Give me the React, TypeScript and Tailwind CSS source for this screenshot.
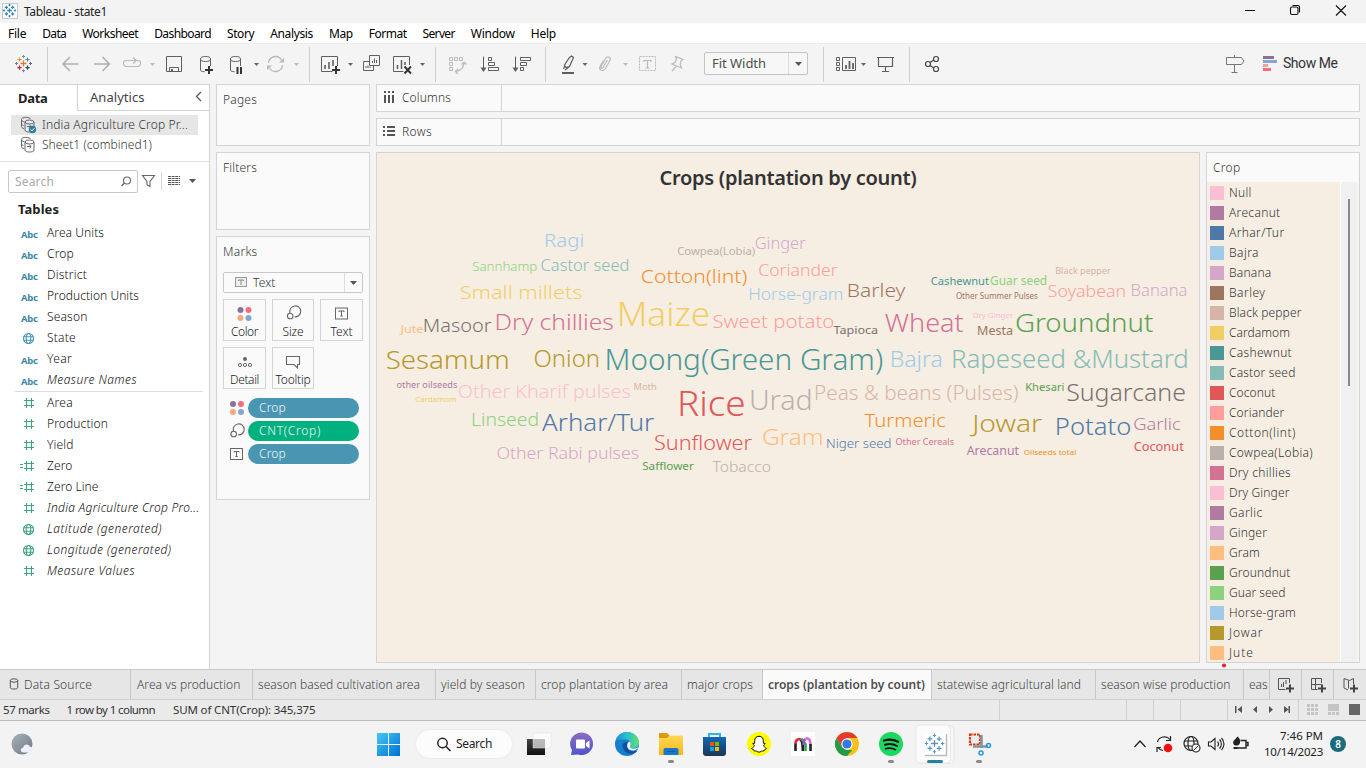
import { useLayoutEffect, useRef, useState } from "react";
import type { ReactNode } from "react";

const BLUE = "#4e79a7", SKY = "#a0cbe8", ORANGE = "#f28e2b", PEACH = "#ffbe7d", GREEN = "#59a14f", LIME = "#8cd17d";
const OLIVE = "#b6992d", YELLOW = "#f1ce63", TEAL = "#499894", AQUA = "#86bcb6", RED = "#e15759", SALMON = "#ff9d9a";
const GRAY = "#79706e", STONE = "#bab0ac", ROSE = "#d37295", PINK = "#fabfd2", PURPLE = "#b07aa1", LILAC = "#d4a6c8";
const BROWN = "#9d7660", TAN = "#d7b5a6";

/** Text whose letter spacing is adjusted so that it spans `w` pixels. */
function Fit({ w, children, className = "" }: { w: number; children: string; className?: string }) {
  const ref = useRef<HTMLSpanElement>(null);
  const [spacing, setSpacing] = useState(0);
  useLayoutEffect(() => {
    const natural = ref.current!.getBoundingClientRect().width;
    setSpacing((w - natural) / children.length);
  }, [w, children]);
  return (
    <span ref={ref} className={"inline-block shrink-0 whitespace-pre " + className} style={{ letterSpacing: spacing + "px" }}>
      {children}
    </span>
  );
}

/** Icon slot: a window of the drawing plane starting at (x, y). */
function Slot({ x, y, w, h, children }: { x: number; y: number; w: number; h: number; children?: ReactNode }) {
  return (
    <svg className="block shrink-0" width={w} height={h} viewBox={`${x} ${y} ${w} ${h}`} fill="none">
      {children}
    </svg>
  );
}

function Plus({ x, y, r, c, s = 1 }: { x: number; y: number; r: number; c: string; s?: number }) {
  return <path d={`M${x - r} ${y}h${2 * r}M${x} ${y - r}v${2 * r}`} stroke={c} strokeWidth={s} />;
}

function TableauMark({ cx, cy, k = 1, mono }: { cx: number; cy: number; k?: number; mono?: string }) {
  const p = (dx: number, dy: number, r: number, c: string, s = 1) => (
    <Plus x={cx + dx * k} y={cy + dy * k} r={r * k} c={mono || c} s={s} />
  );
  return (
    <g>
      {p(0, 0, 3, "#e8762b", 1.3)}
      {p(-4, -4, 2.1, "#eb9129", 1.2)}
      {p(4, -4, 2.1, "#59879b", 1.2)}
      {p(-4, 4.2, 2.1, "#c72035", 1.2)}
      {p(4, 4.2, 2.1, "#1f457e", 1.2)}
      {p(0, -7, 1.5, "#7099a5")}
      {p(0, 7.2, 1.5, "#7b848f")}
      {p(-7, 0, 1.5, "#59879b")}
      {p(7, 0, 1.5, "#5b6591")}
    </g>
  );
}

const Caret = ({ x, y, c = "#666" }: { x: number; y: number; c?: string }) => (
  <path d={`M${x - 2.5} ${y - 1}h5l-2.5 3z`} fill={c} />
);

const TB = { y: 44, h: 40 };
const D = "#5f5f5f";
const L = "#bababa";

const Sep = ({ x, w }: { x: number; w: number }) => (
  <Slot x={x} w={w} {...TB}>
    <path d={`M${x + 0.5} 47v35`} stroke="#d0d0d0" />
  </Slot>
);

const Cylinder = () => (
  <>
    <path d="M200.500 59.500V70c0 1 1 1.600 4 1.700M210.500 59.500V66" stroke={D} />
    <ellipse cx="205.500" cy="59" rx="5" ry="2.500" stroke={D} />
  </>
);

function Toolbar() {
  return (
    <div className="flex h-[41px] border-t border-[#ececec] bg-[#f4f4f4]">
      <Slot x={0} w={47} {...TB}><TableauMark cx={23.5} cy={63.5} /></Slot>
      <Sep x={47} w={7} />
      <Slot x={54} w={32} {...TB}><path d="M63 64h15.500M70 57l-7 7 7 7" stroke="#b0b0b0" strokeWidth="1.600" /></Slot>
      <Slot x={86} w={32} {...TB}><path d="M94 64h15.500M102.500 57l7 7-7 7" stroke="#b0b0b0" strokeWidth="1.600" /></Slot>
      <Slot x={118} w={44} {...TB}>
        <path d="M134 60.500h-8.500a2.500 2.500 0 0 0-2 2.500c0 2 1 3.500 3 3.500h11c2 0 3-1.500 3-3.500 0-1.500-.5-2.500-2-2.500h-5M133 57.500l3.500 3-3.500 3" stroke={L} strokeWidth="1.200" />
        <Caret x={152.500} y={64} c={L} />
      </Slot>
      <Slot x={162} w={28} {...TB}>
        <path d="M166.500 56.500h15v15h-15zM169.500 71.500v-4h9v4" stroke={D} /><path d="M171 69h2v3h-2z" fill={D} />
      </Slot>
      <Slot x={190} w={32} {...TB}>
        <Cylinder /><path d="M205 70h8M209 66v8" stroke="#333" strokeWidth="2" />
      </Slot>
      <Slot x={222} w={42} {...TB}>
        <g transform="translate(30 0)"><Cylinder /></g>
        <path d="M237.500 67v7M241 67v7" stroke="#333" strokeWidth="2" /><Caret x={256.500} y={64} />
      </Slot>
      <Slot x={264} w={45} {...TB}>
        <path d="M268.500 63a7 7 0 0 1 13-3M282.500 65a7 7 0 0 1-13 3" stroke={L} strokeWidth="1.300" />
        <path d="M284 58v4.500h-5zM267 70v-4.500h5z" fill={L} /><Caret x={296.500} y={64} c={L} />
      </Slot>
      <Sep x={309} w={8} />
      <Slot x={317} w={43} {...TB}>
        <path d="M337.500 66v-9.500h-16v15h11" stroke={D} /><path d="M325 65v4M329 62v7M333 60v6" stroke={D} strokeWidth="1.600" />
        <path d="M332 70h8M336 66v8" stroke="#333" strokeWidth="2" /><Caret x={350.500} y={64} />
      </Slot>
      <Slot x={360} w={28} {...TB}>
        <path d="M369.500 55.500h10v10h-10zM369.500 61.500h-6v9h10v-5" stroke={D} />
        <path d="M372.500 61v2M374.500 58.500v4.500M376.500 60v3M366 66v2M368 65.500v2.500M370 66.500v1.500" stroke={D} />
      </Slot>
      <Slot x={388} w={47} {...TB}>
        <path d="M409.500 65v-8.500h-16v15h10" stroke={D} /><path d="M397.500 65v4M401.500 60v9M405 62v3" stroke={D} strokeWidth="1.500" />
        <path d="M404.500 66.500l6.500 7M411 66.500l-6.500 7" stroke="#333" strokeWidth="1.900" /><Caret x={422.500} y={64} />
      </Slot>
      <Sep x={435} w={9} />
      <Slot x={444} w={32} {...TB}>
        <path d="M449.500 57.500h3v3h-3zM454.500 57.500h3v3h-3zM459.500 57.500h3v3h-3zM449.500 62.500h3v3h-3zM449.500 67.500h3v3h-3z" stroke={L} />
        <path d="M464 62c0 5-2 8.500-8 9.500M461.500 64.500l2.500-2.500 2.500 2.500M458 69l-2.500 2.500 2.500 2.500" stroke={L} strokeWidth="1.200" />
      </Slot>
      <Slot x={476} w={32} {...TB}>
        <path d="M483.500 56.500v13M488.500 57.500h3v3h-3zM488.500 62.500h6v3h-6zM488.500 67.500h10v3h-10z" stroke={D} />
        <path d="M480.500 67.500h6l-3 4.500z" fill={D} />
      </Slot>
      <Slot x={508} w={37} {...TB}>
        <path d="M515.500 56.500v13M520.500 57.500h10v3h-10zM520.500 62.500h6v3h-6zM520.500 67.500h3v3h-3z" stroke={D} />
        <path d="M512.500 67.500h6l-3 4.500z" fill={D} />
      </Slot>
      <Sep x={545} w={9} />
      <Slot x={554} w={38} {...TB}>
        <path d="M562 73h12" stroke={D} strokeWidth="2" />
        <path d="M569.500 57.500l2-1.500 2 1.500-4 9-3.500 1-1.500-2.500zM565 65l-1.500 4M569 67l-4 3" stroke={D} strokeWidth="1.200" />
        <Caret x={585} y={64} />
      </Slot>
      <Slot x={592} w={41} {...TB}>
        <path d="M607.500 60l-4.500 7.500c-1 1.500-3 .5-2-1.200l5-8.300c1.500-2.500 5.500-.5 4 2.500l-5 8.500c-2 3-6.500 1-5-2.500l3.500-6" stroke={L} strokeWidth="1.200" />
        <Caret x={625.500} y={64} c={L} />
      </Slot>
      <Slot x={633} w={31} {...TB}>
        <path d="M639.500 56.500h16v14h-16z" stroke={L} strokeDasharray="2 1" />
        <path d="M644 62v-1.500h7V62M647.500 60.500V68M645.500 68h4" stroke={L} strokeWidth="1.200" />
      </Slot>
      <Slot x={664} w={40} {...TB}>
        <path d="M675.500 56.500l7.500 3-2 1.300-.8 3.700 1.300 3.500-9.500-4 3-1.500 1.500-3.500zM676 66.500l-4 4.500" stroke={L} strokeWidth="1.200" />
      </Slot>
      <div className="mt-[8px] flex h-[23px] w-[104px] items-center rounded-[2px] border border-[#c4c4c4] bg-[#f7f7f7] pl-[7px]">
        <Fit w={54} className="text-[13px] leading-[21px] text-[#4e4e4e]">Fit Width</Fit>
        <div className="ml-auto h-[21px] border-l border-[#dcdcdc]">
          <Slot x={790} y={53} w={18} h={21}><path d="M796 62h7l-3.500 4z" fill="#555" /></Slot>
        </div>
      </div>
      <Slot x={808} w={15} {...TB} />
      <Sep x={823} w={8} />
      <Slot x={831} w={40} {...TB}>
        <path d="M836.500 57.500h3v3h-3zM836.500 62.500h3v3h-3zM836.500 67.500h3v3h-3zM842.500 57.500h13v13h-13z" stroke={D} />
        <path d="M846 65v4M849.500 61v8M853 63v6" stroke={D} strokeWidth="1.800" /><Caret x={863.500} y={64} />
      </Slot>
      <Slot x={871} w={38} {...TB}>
        <path d="M877 57.500h17M878.500 58v8.500h14V58M885.500 67v4.500M882 71.500h7" stroke={D} strokeWidth="1.200" />
      </Slot>
      <Sep x={909} w={8} />
      <Slot x={917} w={32} {...TB}>
        <g stroke="#444" strokeWidth="1.200"><circle cx="928" cy="64" r="2.500" /><circle cx="936" cy="59" r="2.500" /><circle cx="936" cy="69" r="2.500" /><path d="M930 62.500l4-2.500M930 65.500l4 2.500" /></g>
      </Slot>
      <div className="ml-auto flex">
        <Slot x={1220} w={40} {...TB}>
          <path d="M1226.500 57.500h15l2.500 3.500-2.500 3.500h-15zM1234.500 55v2.500M1234.500 65v7.500M1231.500 72.500h6" stroke="#777" />
        </Slot>
        <Slot x={1260} w={23} {...TB}>
          <path d="M1263 56h11v3h-11z" fill="#8b7099" /><path d="M1263 60h14v3h-14z" fill="#84a6cf" />
          <path d="M1263 64h5v3h-5z" fill="#f3a683" /><path d="M1263 68h8v3h-8z" fill="#f96c7d" />
        </Slot>
        <div className="-mt-[2px] flex w-[83px] items-center font-['Roboto',sans-serif]">
          <Fit w={54.500} className="text-[14px] leading-[20px] text-[#333]">Show Me</Fit>
        </div>
      </div>
    </div>
  );
}

const MENU: [string, number][] = [
  ["File", 18.2], ["Data", 24], ["Worksheet", 56], ["Dashboard", 56.8], ["Story", 27.2], ["Analysis", 42.8],
  ["Map", 23.7], ["Format", 37.8], ["Server", 32.3], ["Window", 44], ["Help", 25],
];

const DsIcon = ({ check }: { check?: boolean }) => (
  <Slot x={20} y={115} w={18} h={20}>
    <g stroke="#666">
      <path d="M24 128.500c-2-.3-2.500-1-2.500-2v-6.500M30.500 119c-.5-2-9-2.500-9 .5 0 1.500 1 2 3 2.300M21.500 123.500c0 1 .5 1.500 2 2" />
      <ellipse cx="29.500" cy="122" rx="4.500" ry="2" /><path d="M25 122v8c0 1.500 2 2 4.500 2s4.500-.5 4.500-2v-8M27 126.500h4M29.500 125l1.700 1.500-1.700 1.500" />
    </g>
    {check && <><circle cx="32.500" cy="129.500" r="3.700" fill="#2f7d9e" /><path d="M30.700 129.500l1.300 1.400 2.400-2.700" stroke="#fff" /></>}
  </Slot>
);

const Globe = ({ c }: { c: string }) => (
  <g stroke={c} strokeWidth="1.100"><circle cx="28.500" cy="10.500" r="5" /><ellipse cx="28.500" cy="10.500" rx="2.300" ry="5" /><path d="M23.500 8.800h10M23.500 12.200h10" /></g>
);

type FieldKind = "abc" | "geo" | "num" | "calc" | "geonum";
const DIMS: [FieldKind, string, number, boolean?][] = [
  ["abc", "Area Units", 57], ["abc", "Crop", 27], ["abc", "District", 40], ["abc", "Production Units", 92],
  ["abc", "Season", 40.5], ["geo", "State", 29], ["abc", "Year", 25], ["abc", "Measure Names", 90, true],
];
const MEAS: [FieldKind, string, number, boolean?][] = [
  ["num", "Area", 26], ["num", "Production", 61], ["num", "Yield", 26.5], ["calc", "Zero", 25.5], ["calc", "Zero Line", 51.5],
  ["num", "India Agriculture Crop Pro...", 152.5, true], ["geonum", "Latitude (generated)", 115, true],
  ["geonum", "Longitude (generated)", 124.5, true], ["num", "Measure Values", 88, true],
];

function Field({ kind, name, w, italic }: { kind: FieldKind; name: string; w: number; italic?: boolean }) {
  return (
    <div className="flex h-[21px] items-center">
      {kind === "abc" ? (
        <div className="-mt-[3px] w-[47px] pl-[21px]"><Fit w={16.500} className="text-[9.500px] leading-[21px] font-bold text-[#4187a2]">Abc</Fit></div>
      ) : (
        <Slot x={0} y={0} w={47} h={21}>
          {kind === "geo" && <Globe c="#4996b2" />}
          {kind === "geonum" && <Globe c="#3fa57f" />}
          {(kind === "num" || kind === "calc") && <path d="M26.500 5v10M31.500 5v10M24 7.500h10M24 12.500h10" stroke="#3fa57f" strokeWidth="1.100" />}
          {kind === "calc" && <path d="M20 8.500h3M20 11.500h3" stroke="#3fa57f" strokeWidth="1.100" />}
        </Slot>
      )}
      <Fit w={w} className={"-mt-[2px] text-[12px] leading-[19px] font-light " + (italic ? "text-[#111] italic" : "text-[#111]")}>{name}</Fit>
    </div>
  );
}

function DataPane() {
  return (
    <div className="flex h-[585px] w-[210px] flex-col border-t border-r border-[#d4d4d4] bg-white">
      <div className="flex h-[26px]">
        <div className="w-[77px] pl-[18px]"><Fit w={29.500} className="text-[13px] leading-[24px] font-bold text-[#222]">Data</Fit></div>
        <div className="flex flex-1 border-b border-l border-[#d4d4d4] pl-[12px]">
          <Fit w={54.500} className="text-[13px] leading-[25px] text-[#444]">Analytics</Fit>
          <div className="ml-auto"><Slot x={191} y={85} w={18} h={25}><path d="M201 92l-4.500 4.500 4.500 4.500" stroke="#555" strokeWidth="1.200" /></Slot></div>
        </div>
      </div>
      <div className="mt-[4px] ml-[11px] flex h-[20px] w-[187px] items-center bg-[#e6e6e6] pl-[9px] text-[12px] font-light text-[#333]">
        <DsIcon check /><Fit w={146} className="ml-[4px] leading-[18px]">India Agriculture Crop Pr...</Fit>
      </div>
      <div className="ml-[20px] flex h-[20px] items-center text-[12px] font-light text-[#333]">
        <DsIcon /><Fit w={110} className="ml-[4px] leading-[18px]">Sheet1 (combined1)</Fit>
      </div>
      <div className="mt-[6px] h-px shrink-0 bg-[#e0e0e0]" />
      <div className="mt-[8px] flex h-[23px] shrink-0">
        <div className="ml-[8px] flex w-[130px] items-center justify-between rounded-[2px] border border-[#c8c8c8] pl-[6px]">
          <Fit w={39} className="text-[12px] leading-[20px] text-[#aaa]">Search</Fit>
          <Slot x={118} y={170} w={18} h={21}><circle cx="126" cy="179.500" r="3.500" stroke="#666" strokeWidth="1.100" /><path d="M123.500 182l-3 3" stroke="#666" strokeWidth="1.400" /></Slot>
        </div>
        <Slot x={138} y={170} w={71} h={23}>
          <path d="M142.500 175.500h12l-4.500 6v5l-3-1.500v-3.500z" stroke="#666" strokeWidth="1.100" />
          <path d="M161.500 172v18" stroke="#d4d4d4" />
          <path d="M168 176.500h12M168 178.500h12M168 180.500h12M168 182.500h12M168 184.500h12" stroke="#555" strokeDasharray="3 .600" />
          <path d="M189 179h7l-3.500 4z" fill="#555" />
        </Slot>
      </div>
      <Fit w={41} className="mt-[6px] ml-[18px] self-start text-[13px] leading-[20px] font-bold text-[#222]">Tables</Fit>
      <div className="mt-[4px]">{DIMS.map(([k, n, w, i]) => <Field key={n} kind={k} name={n} w={w} italic={i} />)}</div>
      <div className="mr-[6px] mb-px ml-[15px] h-px shrink-0 bg-[#dcdcdc]" />
      <div>{MEAS.map(([k, n, w, i]) => <Field key={n} kind={k} name={n} w={w} italic={i} />)}</div>
    </div>
  );
}

const FourDots = ({ x, y }: { x: number; y: number }) => (
  <g><circle cx={x - 4} cy={y - 4} r="3" fill="#8b7099" /><circle cx={x + 4} cy={y - 4} r="3" fill="#f96c7d" /><circle cx={x - 4} cy={y + 4} r="3" fill="#f3a97c" /><circle cx={x + 4} cy={y + 4} r="3" fill="#84a6cf" /></g>
);
const SizeIcon = ({ x, y }: { x: number; y: number }) => (
  <g stroke="#666" strokeWidth="1.100"><path d={`M${x - 4.500} ${y + 1}a5.500 5.500 0 1 1 4.500 3.800`} /><circle cx={x - 4.300} cy={y + 4} r="2.800" /></g>
);
const TextIcon = ({ x, y }: { x: number; y: number }) => (
  <g stroke="#666"><rect x={x - 6} y={y - 5.500} width="12" height="11" /><path d={`M${x - 2.500} ${y - 1.500}v-1h5v1M${x} ${y - 2.500}v5M${x - 1.200} ${y + 2.500}h2.500`} /></g>
);

function MarkButton({ label, w, width, children }: { label: string; w: number; width: string; children: ReactNode }) {
  return (
    <div className={"flex h-[42px] flex-col items-center border border-[#d4d4d4] bg-[#fafafa] " + width}>
      <Slot x={-12} y={-13} w={24} h={24}>{children}</Slot>
      <Fit w={w} className="text-[12px] leading-[16px] font-light text-[#222]">{label}</Fit>
    </div>
  );
}

function Pill({ label, w, color, children }: { label: string; w: number; color: string; children: ReactNode }) {
  return (
    <div className="flex h-[20px] items-center">
      <Slot x={-10} y={-10} w={21} h={20}>{children}</Slot>
      <div className={"ml-px h-[20px] w-[111px] rounded-full pl-[11px] text-[12px] leading-[19px] text-[#f4f8fa] " + color}>
        <Fit w={w}>{label}</Fit>
      </div>
    </div>
  );
}

function Cards() {
  const card = "border border-[#d4d4d4] bg-[#fafafa] pl-[6px] text-[12px] font-light text-[#333] ";
  return (
    <div className="ml-[6px] flex w-[154px] flex-col gap-[6px]">
      <div className={card + "h-[62px]"}><Fit w={34} className="mt-[5px] leading-[20px]">Pages</Fit></div>
      <div className={card + "h-[78px]"}><Fit w={34} className="mt-[5px] leading-[20px]">Filters</Fit></div>
      <div className={card + "flex h-[264px] flex-col"}>
        <Fit w={34.500} className="mt-[5px] self-start leading-[20px]">Marks</Fit>
        <div className="mt-[10px] flex h-[21px] w-[140px] items-center rounded-[2px] border border-[#c8c8c8]">
          <Slot x={223} y={273} w={29} h={19}><rect x="234.500" y="277.500" width="11" height="9" fill="#eee" stroke="#999" /><path d="M237.500 281v-1h5v1M240 280v5" stroke="#888" /></Slot>
          <Fit w={22.500} className="leading-[19px]">Text</Fit>
          <div className="ml-auto h-[19px] border-l border-[#dcdcdc]"><Slot x={345} y={273} w={17} h={19}><path d="M350 281h7l-3.500 4z" fill="#555" /></Slot></div>
        </div>
        <div className="mt-[6px] flex w-[140px] flex-wrap gap-[6px]">
          <MarkButton label="Color" w={27} width="w-[43px]"><FourDots x={-0.500} y={1} /></MarkButton>
          <MarkButton label="Size" w={21} width="w-[42px]"><SizeIcon x={1.500} y={-1} /></MarkButton>
          <MarkButton label="Text" w={22} width="w-[43px]"><TextIcon x={-0.500} y={0.500} /></MarkButton>
          <MarkButton label="Detail" w={29} width="w-[43px]">
            <circle cx="0" cy="-2" r="2" fill="#666" /><g stroke="#666"><circle cx="-5" cy="4" r="1.600" /><circle cx="0" cy="4" r="1.600" /><circle cx="5" cy="4" r="1.600" /></g>
          </MarkButton>
          <MarkButton label="Tooltip" w={35} width="w-[42px]"><path d="M-6.500-4.500h13v8h-2v3.500l-3.500-3.500h-7.500z" stroke="#666" strokeWidth="1.100" /></MarkButton>
        </div>
        <div className="mt-[9px] ml-[3px] flex flex-col gap-[3px]">
          <Pill label="Crop" w={27} color="bg-[#4996b2]"><FourDots x={1} y={0} /></Pill>
          <Pill label="CNT(Crop)" w={62} color="bg-[#00b180]"><SizeIcon x={2} y={-1} /></Pill>
          <Pill label="Crop" w={27} color="bg-[#4996b2]"><TextIcon x={0.500} y={0} /></Pill>
        </div>
      </div>
    </div>
  );
}

/** word, left, baseline, width, font size, colour */
const WORDS: [string, number, number, number, number, string][] = [
  ["Ragi", 545, 247, 38.5, 18.5, SKY], ["Sannhamp", 472.8, 271, 64, 13, LIME], ["Castor seed", 541.3, 271, 87.5, 15.5, AQUA],
  ["Cowpea(Lobia)", 677.7, 255, 77, 11.5, STONE], ["Ginger", 755.5, 249, 49.5, 15.5, LILAC], ["Coriander", 759, 276, 78, 16, SALMON],
  ["Cotton(lint)", 641.7, 283.3, 105, 18.5, ORANGE], ["Small millets", 460.7, 299, 121, 19, YELLOW], ["Horse-gram", 749, 300.3, 93.7, 16, SKY],
  ["Barley", 847.7, 297, 57, 18, BROWN], ["Maize", 618.3, 326, 90.5, 33, YELLOW], ["Jute", 401, 333, 22, 11, PEACH],
  ["Masoor", 423.7, 332, 67.3, 18, GRAY], ["Dry chillies", 495.7, 330, 117.3, 22.5, ROSE], ["Sweet potato", 713.3, 328.3, 120.4, 18, SALMON],
  ["Tapioca", 834, 334, 43.7, 11.5, GRAY], ["Wheat", 886, 332, 76.7, 25, ROSE], ["Groundnut", 1016.3, 332, 136, 26.5, GREEN],
  ["Dry Ginger", 973, 317.7, 40, 7.5, PINK], ["Mesta", 977.7, 335.3, 35, 12, BROWN], ["Cashewnut", 931.3, 285, 57.3, 11.3, TEAL],
  ["Guar seed", 990.7, 285, 56, 12, LIME], ["Black pepper", 1055.7, 274, 54.7, 9.3, TAN], ["Other Summer Pulses", 956.3, 299, 81.3, 8, BROWN],
  ["Soyabean", 1048.7, 297, 76.7, 17, SALMON], ["Banana", 1131.3, 296, 55.5, 15.5, LILAC], ["Sesamum", 387, 369, 121.7, 26.5, OLIVE],
  ["Onion", 534.7, 367, 64.3, 24, OLIVE], ["Moong(Green Gram)", 606, 370, 276, 29, TEAL], ["Bajra", 890.7, 367, 51.3, 21, SKY],
  ["Rapeseed &Mustard", 952.3, 368, 235.5, 25.5, AQUA], ["other oilseeds", 397, 388, 60, 9, PURPLE], ["Cardamom", 415.7, 401.7, 40.5, 7.5, YELLOW],
  ["Other Kharif pulses", 458.7, 398, 171.3, 18.5, PINK], ["Moth", 634, 390, 22.3, 9.3, TAN], ["Rice", 678.7, 416, 65.7, 35, RED],
  ["Urad", 750.3, 410, 61.4, 27, STONE], ["Peas & beans (Pulses)", 815, 400, 202.7, 19.5, TAN], ["Khesari", 1025.7, 391.3, 38.3, 11, GREEN],
  ["Sugarcane", 1067.3, 401, 117.7, 23.5, GRAY], ["Linseed", 472, 426, 66.3, 18, LIME], ["Arhar/Tur", 543.3, 431, 110, 24, BLUE],
  ["Other Rabi pulses", 497.3, 459, 141, 16.5, LILAC], ["Sunflower", 655, 450, 96.3, 19.5, RED], ["Gram", 763, 445, 59.7, 22.5, PEACH],
  ["Safflower", 642.7, 470, 50.7, 11, GREEN], ["Tobacco", 713.3, 472, 57, 15, STONE], ["Turmeric", 865.3, 427, 80, 18, ORANGE],
  ["Niger seed", 826.7, 448, 64.3, 13, BLUE], ["Other Cereals", 896, 445, 57.7, 9.3, ROSE], ["Jowar", 973.3, 432.3, 68, 23, OLIVE],
  ["Potato", 1056, 435, 74.3, 24, BLUE], ["Garlic", 1134, 430, 46, 16.5, PURPLE], ["Coconut", 1134.3, 451, 49, 12.3, RED],
  ["Arecanut", 967.3, 455, 51.3, 12, PURPLE], ["Oilseeds total", 1024, 455, 52, 7.5, ORANGE],
];

function WordCloud() {
  return (
    <div className="flex w-[824px] flex-col items-center border border-[#d4d4d4] bg-[#f6eee3]">
      <Fit w={257} className="mt-[10px] text-[20px] leading-[30px] font-semibold text-[#333]">Crops (plantation by count)</Fit>
      <svg className="block" width={822} height={469} viewBox="377 193 822 469">
        {WORDS.map(([t, x, y, w, s, c]) => (
          <text key={t} x={x - 0.05 * s} y={y} textLength={w + 0.09 * s} lengthAdjust="spacingAndGlyphs" fontSize={s} fill={c} fontWeight={s < 12.8 ? 400 : 300}>{t}</text>
        ))}
      </svg>
    </div>
  );
}

const LEGEND: [string, string, number][] = [
  ["Null", PINK, 22.7], ["Arecanut", PURPLE, 51.5], ["Arhar/Tur", BLUE, 55.5], ["Bajra", SKY, 30], ["Banana", LILAC, 42.5], ["Barley", BROWN, 36.5],
  ["Black pepper", TAN, 72.5], ["Cardamom", YELLOW, 61], ["Cashewnut", TEAL, 63], ["Castor seed", AQUA, 66.5], ["Coconut", RED, 46.5],
  ["Coriander", SALMON, 55.5], ["Cotton(lint)", ORANGE, 67], ["Cowpea(Lobia)", STONE, 84], ["Dry chillies", ROSE, 62], ["Dry Ginger", PINK, 60.5],
  ["Garlic", PURPLE, 33.5], ["Ginger", LILAC, 38], ["Gram", PEACH, 31], ["Groundnut", GREEN, 61.5], ["Guar seed", LIME, 56.5],
  ["Horse-gram", SKY, 67], ["Jowar", OLIVE, 34.5], ["Jute", PEACH, 25],
];

function Legend() {
  return (
    <div className="flex w-[154px] flex-col border border-[#d4d4d4] bg-[#fafafa]">
      <div className="h-[29px] pl-[6px]"><Fit w={27.500} className="text-[12px] leading-[29px] font-light text-[#333]">Crop</Fit></div>
      <div className="flex h-[480px]">
        <div className="w-[133px] overflow-hidden bg-[#f6eee3] pt-px pl-[3px]">
          {LEGEND.map(([n, c, w]) => (
            <div key={n} className="flex h-[20px] items-center pb-px">
              <svg className="block" width={14} height={14}><rect width={14} height={14} fill={c} /></svg>
              <Fit w={w} className="ml-[5px] pt-px text-[12px] leading-[18px] font-light text-[#333]">{n}</Fit>
            </div>
          ))}
        </div>
        <div className="w-px bg-white" />
        <div className="flex w-[16px] justify-center bg-[#f0f0f0] pt-[17px]"><div className="h-[187px] w-[2px] bg-[#8a8a8a]" /></div>
        <div className="flex-1 bg-[#f6eee3]/50" />
      </div>
    </div>
  );
}

const TABS: [string, number, string, string][] = [
  ["Area vs production", 103.5, "w-[122px]", "pl-[6px]"], ["season based cultivation area", 162, "w-[183px]", "pl-[5px]"],
  ["yield by season", 84, "w-[100px]", "pl-[5px]"], ["crop plantation by area", 127, "w-[146px]", "pl-[5px]"],
  ["major crops", 66, "w-[81px]", "pl-[5px]"], ["crops (plantation by count)", 157, "w-[169px]", "pl-[5px]"],
  ["statewise agricultural land", 144, "w-[164px]", "pl-[5px]"], ["season wise production", 129.5, "w-[148px]", "pl-[5px]"],
  ["eas", 18.5, "w-[26px]", "pl-[5px]"],
];

function SheetTabs() {
  const y = 670, h = 29, add = "#555";
  return (
    <div className="flex h-[30px] border-t border-[#c8c8c8] bg-[#e6e6e6] text-[12px] leading-[29px] font-light text-[#444]">
      <div className="flex w-[131px] shrink-0 border-r border-[#c8c8c8]">
        <Slot x={0} y={y} w={24} h={h}><ellipse cx="14" cy="680.500" rx="3.700" ry="1.700" stroke={add} /><path d="M10.300 680.500v7c0 1 1.500 1.500 3.700 1.500s3.700-.5 3.700-1.500v-7" stroke={add} /></Slot>
        <Fit w={68}>Data Source</Fit>
      </div>
      {TABS.map(([t, w, width, pad], i) => (
        <div key={t} className={"shrink-0 overflow-hidden border-r border-[#c8c8c8] " + width + " " + pad + (i === 5 ? " bg-[#fafafa] font-semibold text-[#4e4e4e]" : "")}>
          <Fit w={w} className={i === 5 ? "leading-[27px]" : ""}>{t}</Fit>
        </div>
      ))}
      <Slot x={1270} y={y} w={96} h={h}>
        <path d="M1301.500 670v29M1333.500 670v29" stroke="#c8c8c8" />
        <path d="M1289.500 683v-4.500h-11v11h7M1281.500 684v3M1283.500 682v5M1286 680v4" stroke={add} />
        <path d="M1321.500 683v-4.500h-10v11h6M1311.500 684.500h10M1315.500 678.500v11" stroke={add} />
        <path d="M1353.500 684v-5.500l-4 2-5.500-2v9.500l4 2M1348.500 680.500v8" stroke={add} />
        <g stroke="#444" strokeWidth="2"><path d="M1286 688.500h8M1290 684.500v8M1318 688.500h8M1322 684.500v8M1350 688.500h8M1354 684.500v8" /></g>
      </Slot>
    </div>
  );
}

function StatusBar() {
  const dots = [0, 4, 8];
  return (
    <div className="flex h-[22px] border-y border-t-[#d0d0d0] border-b-[#bcbcbc] bg-[#eaeaea] pl-[3px] text-[11.500px] leading-[20px] text-[#333]">
      <Fit w={46.500}>57 marks</Fit>
      <Fit w={88.500} className="ml-[17px]">1 row by 1 column</Fit>
      <Fit w={142.500} className="ml-[18px]">SUM of CNT(Crop): 345,375</Fit>
      <div className="ml-auto">
        <Slot x={990} y={700} w={376} h={20}>
          <path d="M999.500 700v20M1126.500 700v20M1153.500 700v20M1180.500 700v20M1227.500 700v20M1298.500 700v20" stroke="#cfcfcf" />
          <path d="M1235 706h1.500v7h-1.500zM1242 706v7l-4.500-3.500zM1257 706v7l-4-3.500zM1269 706v7l4-3.500zM1284 706v7l4.500-3.500zM1288.500 706h1.500v7h-1.500z" fill="#555" />
          {dots.map((a) => dots.map((b) => <rect key={a + "-" + b} x={1307 + a} y={704 + b} width="3" height="3" fill="#c4c4c4" />))}
          <rect x="1328" y="704" width="11" height="7" fill="#c4c4c4" />
          {dots.map((a) => <rect key={a} x={1328 + a} y="712" width="3" height="3" fill="#c4c4c4" />)}
          <rect x="1349" y="704" width="11" height="11" fill="#666" />
        </Slot>
      </div>
    </div>
  );
}

function Taskbar() {
  const b = { y: 721, h: 47 };
  return (
    <div className="flex h-[47px] bg-[#f3f3f3]">
      <svg width="0" height="0" className="absolute">
        <defs>
          <linearGradient id="win" x1="0" y1="0" x2="1" y2="1"><stop offset="0" stopColor="#45c8f7" /><stop offset="1" stopColor="#0070d4" /></linearGradient>
          <linearGradient id="dark" x1="0" y1="0" x2="0" y2="1"><stop offset="0" stopColor="#444" /><stop offset="1" stopColor="#111" /></linearGradient>
          <linearGradient id="chat" x1="0" y1="0" x2="0" y2="1"><stop offset="0" stopColor="#8b6cc4" /><stop offset="1" stopColor="#4f55c8" /></linearGradient>
          <linearGradient id="edge" x1="0" y1="0" x2="1" y2="0"><stop offset="0" stopColor="#1a8fd8" /><stop offset=".5" stopColor="#2cc0d0" /><stop offset="1" stopColor="#66e06a" /></linearGradient>
          <linearGradient id="folder" x1="0" y1="0" x2="0" y2="1"><stop offset="0" stopColor="#ffdb5c" /><stop offset="1" stopColor="#f9b81c" /></linearGradient>
          <linearGradient id="bag" x1="0" y1="0" x2="0" y2="1"><stop offset="0" stopColor="#0f68b8" /><stop offset="1" stopColor="#1d3557" /></linearGradient>
          <linearGradient id="moon" x1="0" y1="0" x2="1" y2="1"><stop offset="0" stopColor="#a9b2ba" /><stop offset="1" stopColor="#6f7a84" /></linearGradient>
        </defs>
      </svg>
      <Slot x={0} w={370} {...b}>
        <circle cx="22" cy="744" r="10.500" fill="url(#moon)" />
        <path d="M23.500 752.500c-3.500 0-3.500-4.500-.3-4.700.5-3.500 5-4.500 6.600-1 4.500-.3 4.500 5.700.7 5.700z" fill="#eef1f8" />
      </Slot>
      <Slot x={370} w={45} {...b}>
        <path d="M377 733h11v11h-11zM389 733h11v11h-11zM377 745h11v11h-11zM389 745h11v11h-11z" fill="url(#win)" />
      </Slot>
      <div className="mt-[8px] flex h-[30px] w-[98px] items-center rounded-full border border-[#ececec] bg-[#fcfcfc] pl-[20px]">
        <Slot x={436} y={736} w={20} h={16}><circle cx="442.500" cy="743" r="4.700" stroke="#222" strokeWidth="1.500" /><path d="M446 746.500l4.500 4.500" stroke="#222" strokeWidth="1.600" /></Slot>
        <Fit w={36} className="text-[12px] leading-[20px] text-[#222]">Search</Fit>
      </div>
      <Slot x={513} w={47} {...b}>
        <path d="M527 739h18v16h-18z" fill="url(#dark)" /><path d="M533 733h18v15h-18z" fill="#fff" opacity=".65" /><path d="M533 733h18v15h-18z" stroke="#ddd" strokeWidth=".5" />
      </Slot>
      <Slot x={560} w={44} {...b}>
        <path d="M571 755l1-5a11.500 11.300 0 1 1 6 4.500z" fill="url(#chat)" /><rect x="576" y="739.500" width="9" height="9" rx="1" fill="#fff" /><path d="M586 743l3.500-2.500v8l-3.500-2.500z" fill="#fff" />
      </Slot>
      <Slot x={604} w={44} {...b}>
        <circle cx="627" cy="744" r="12" fill="#1580d0" />
        <path d="M615.500 741c2-6 7-9.200 12-9 7 .3 12 5.500 11.500 11-.4 4-4 5.500-7 5-2-.4-2.500-1-1.500-2.500 1.500-2.500-.5-6-5-6-4 0-7.500 0-10 1.500z" fill="url(#edge)" />
        <path d="M622.500 745c0 6 5 10 10.500 8.500 2-.5 3.500-1.500 4.500-3-3 1.500-9 1.500-10.500-3.500-.7-2.500.5-4.500 1-5-3-.5-5.500 1-5.500 3z" fill="#10509c" />
        <path d="M629.500 741.500c1.700 1.300 1.300 3.500.8 4.500-1 1.500 1 2.500 2.500 2.500 3 .3 4.500-.5 5.700-1.500-1 2.500-3.500 3.800-6.200 3.500-4-.3-5.500-3.500-5-6 .3-1.500 1-2.500 2.200-3z" fill="#f3f3f3" />
      </Slot>
      <Slot x={648} w={45} {...b}>
        <path d="M659 734.500c0-1 .5-1.500 1.500-1.500h6l3 2.500h12c1 0 1.500.5 1.500 1.500v18h-24z" fill="url(#folder)" /><path d="M659 734c0-.6.4-1 1-1h7l2.500 2.500-2.500 2.500h-8z" fill="#dd9a0b" />
        <path d="M663.500 755v-4.500c0-1.500.5-2.500 2-2.500h11c1.500 0 2 1 2 2.500v4.500z" fill="#1878c8" /><path d="M667 751.500h8" stroke="#0d5ca0" />
        <rect x="668" y="760" width="6" height="3" rx="1.500" fill="#8a8a8a" />
      </Slot>
      <Slot x={693} w={44} {...b}>
        <path d="M709 739v-5h11v5" stroke="#2cb7ee" strokeWidth="2" /><path d="M703 737h23v16c0 2-1 3-3 3h-17c-2 0-3-1-3-3z" fill="url(#bag)" />
        <path d="M710 742h4v4h-4z" fill="#f25022" /><path d="M715 742h4v4h-4z" fill="#7fba00" /><path d="M710 747h4v4h-4z" fill="#00a4ef" /><path d="M715 747h4v4h-4z" fill="#ffb900" />
      </Slot>
      <Slot x={737} w={44} {...b}>
        <circle cx="759" cy="744" r="12" fill="#fffc00" />
        <path d="M759 736.300c-3 0-4.300 2-4.300 4.500v2.400l-1.900.3c-.3 1 1.500 1.200 1.500 1.900-.2 1.500-1.700 2.600-2.800 3.100.2 1 2 1 2.300 1.300l.4 1.200c1 0 2-.3 2.800.4 1.300 1 2.700 1 4 0 .8-.7 1.800-.4 2.800-.4l.4-1.200c.3-.3 2.100-.3 2.300-1.300-1.100-.5-2.600-1.600-2.800-3.100 0-.7 1.800-.9 1.500-1.900l-1.900-.3v-2.400c0-2.500-1.300-4.500-4.300-4.500z" fill="#fff" stroke="#111" />
      </Slot>
      <Slot x={781} w={44} {...b}>
        <path d="M791 732h24v24h-24z" fill="#fff" />
        <g strokeWidth="2.600" fill="none"><path d="M795.500 751v-8" stroke="#222" /><path d="M795.500 744c0-5 4-6 6-3.500" stroke="#e5283c" /><path d="M801 740c1.500 1.500 1.800 3 1.800 11" stroke="#222" /><path d="M801.500 738.500l4 6v6.500" stroke="#2ea65a" /><path d="M803.500 745c0-3 .5-5 2-6" stroke="#a44bd6" /><path d="M805.500 738.500c4.500-1 5 3 5 7" stroke="#d86bd8" /><path d="M810.500 744v7" stroke="#222" /></g>
      </Slot>
      <Slot x={825} w={44} {...b}>
        <circle cx="847" cy="744" r="12" fill="#fbc116" />
        <path d="M847 738h10.400a12 12 0 0 0-20.800 0l5.200 9z" fill="#e33b2e" />
        <path d="M836.600 738l5.200 9 5.200 3h5.200l-5.200 6A12 12 0 0 1 836.600 738z" fill="#229a4a" />
        <circle cx="847" cy="744" r="5.700" fill="#fff" /><circle cx="847" cy="744" r="4.600" fill="#3578e5" />
      </Slot>
      <Slot x={869} w={45} {...b}>
        <circle cx="891" cy="744" r="12" fill="#1ed760" /><g stroke="#111" strokeLinecap="round"><path d="M884 740.500c5-1.500 10-1 14 1.300" strokeWidth="2.300" /><path d="M885 744.800c4-1.200 8.500-.8 12 1.200" strokeWidth="2" /><path d="M885.500 748.700c3.500-1 7-.7 10 1" strokeWidth="1.600" /></g>
        <rect x="888" y="760" width="6" height="3" rx="1.500" fill="#8a8a8a" />
      </Slot>
      <Slot x={914} w={44} {...b}>
        <rect x="918" y="725.500" width="36" height="38" rx="4" fill="#f8f8f8" stroke="#e6e6e6" /><rect x="916" y="725" width="34.500" height="38" rx="4" fill="#fbfbfb" stroke="#e8e8e8" />
        <path d="M925 734h21v21h-21z" fill="#fff" /><path d="M925 755.500h21.500V734" stroke="#bbb" strokeWidth="1.400" /><TableauMark cx={934.500} cy={743.500} k={1.150} mono="#5795bb" />
        <rect x="927" y="760" width="16" height="3" rx="1.500" fill="#24839a" />
      </Slot>
      <Slot x={958} w={45} {...b}>
        <path d="M969 734h13v13h-13z" fill="#e8edf2" /><path d="M970 734.500h10v10h-10z" stroke="#d83b01" strokeWidth="2.200" strokeDasharray="2.500 1" />
        <path d="M981.500 735v13M973 746.500h15" stroke="#8b9299" strokeWidth="2.600" /><circle cx="988.500" cy="745.500" r="2" stroke="#1c9be6" strokeWidth="1.500" /><circle cx="981" cy="753" r="2" stroke="#1c9be6" strokeWidth="1.500" />
        <rect x="976" y="760" width="6" height="3" rx="1.500" fill="#8a8a8a" />
      </Slot>
      <div className="ml-auto flex">
        <Slot x={1130} w={130} {...b}>
          <path d="M1134.500 747l5.500-6 5.500 6" stroke="#222" strokeWidth="1.300" />
          <g stroke="#222" strokeWidth="1.200"><path d="M1157.500 742a7 6.500 0 0 1 12.500-2.500M1170.500 736v4.500h-4.500M1163 750.500a7 6.500 0 0 1-5-3M1157 752v-4.500h4" />
            <circle cx="1191" cy="743.500" r="7" /><ellipse cx="1191" cy="743.500" rx="3" ry="7" /><path d="M1184.500 741h13M1184.500 746h8" /></g>
          <circle cx="1168" cy="748" r="4.300" fill="#f01010" />
          <circle cx="1196" cy="748" r="4" fill="#f3f3f3" stroke="#222" strokeWidth="1.100" /><path d="M1193.500 750.500l5-5" stroke="#222" />
          <g stroke="#222" strokeWidth="1.100"><path d="M1208.500 742v4h2.500l4 3.500v-11l-4 3.500zM1217.500 741.500c1.300 1.500 1.300 3.500 0 5M1219.500 739.500c2.500 2.500 2.500 6.500 0 9M1221.500 738c3.300 3.500 3.300 8.500 0 12" />
            <path d="M1240.500 740.500h5.500v7.500h-11M1246.500 742.500h1.500v3h-1.500" strokeWidth="1.400" /></g>
          <path d="M1237.500 736.500c2.500 2 3.500 5 2 7.500-1.500 2-5 2-6 0-1.500-3 2-4.500 4-7.500z" fill="#222" /><path d="M1233.500 747h4v2h-4z" fill="#222" />
        </Slot>
        <div className="flex w-[63px] flex-col items-end pt-[7px] text-[11.500px] leading-[16px] text-[#222]">
          <Fit w={43}>7:46 PM</Fit><Fit w={59}>10/14/2023</Fit>
        </div>
        <div className="mt-[15px] mr-[20px] ml-[7px] h-[16px] w-[16px] rounded-full bg-[#1c6b7c] text-center text-[10px] leading-[16px] font-semibold text-white">8</div>
      </div>
    </div>
  );
}

export default function App() {
  const shelf = "flex h-[28px] border border-[#d4d4d4] bg-[#fafafa] text-[12px] leading-[26px] font-light text-[#333]";
  return (
    <div className="flex h-[768px] w-[1366px] flex-col overflow-hidden bg-[#f4f4f4] font-['Noto_Sans',sans-serif]">
      <div className="flex h-[23px] items-center bg-[#f3f3f3]">
        <Slot x={0} y={0} w={24} h={23}>
          <rect x="2.500" y="3.500" width="15" height="15" fill="#fdfdfd" stroke="#c8c8c8" /><TableauMark cx={9.500} cy={10.500} k={0.780} mono="#3486b2" />
        </Slot>
        <Fit w={83} className="text-[12px] leading-[22px] text-[#222]">Tableau - state1</Fit>
        <div className="ml-auto"><Slot x={1240} y={0} w={126} h={23}>
          <g stroke="#111" strokeWidth="1.100"><path d="M1245 10.500h10M1292.500 5.500h5.500c1 0 1.500.7 1.500 1.500v5.500M1336 5.500l10 10M1346 5.500l-10 10" /><rect x="1290.500" y="7" width="7.500" height="7.500" rx="1.500" /></g>
        </Slot></div>
      </div>
      <div className="flex h-[20px] gap-[16px] bg-white pl-[8px] text-[12px] leading-[21px] text-black">
        {MENU.map(([t, w]) => <Fit key={t} w={w}>{t}</Fit>)}
      </div>
      <Toolbar />
      <div className="flex h-[585px]">
        <DataPane />
        <Cards />
        <div className="ml-[6px] flex w-[984px] flex-col">
          <div className={shelf}>
            <Slot x={377} y={85} w={25} h={26}><path d="M385 91v2M389 91v2M393 91v2M385 95v8M389 95v8M393 95v8" stroke="#555" strokeWidth="2" /></Slot>
            <div className="w-[99px]"><Fit w={49}>Columns</Fit></div><div className="w-px bg-[#d4d4d4]" />
          </div>
          <div className={"mt-[6px] " + shelf}>
            <Slot x={377} y={119} w={25} h={26}><path d="M383 127h2M383 131h2M383 135h2M387 127h8M387 131h8M387 135h8" stroke="#555" strokeWidth="2" /></Slot>
            <div className="w-[99px]"><Fit w={30}>Rows</Fit></div><div className="w-px bg-[#d4d4d4]" />
          </div>
          <div className="mt-[6px] flex h-[511px] gap-[6px]"><WordCloud /><Legend /></div>
          <svg className="block" width="984" height="6"><circle cx="848" cy="2.500" r="2" fill="#e5202a" /></svg>
        </div>
      </div>
      <SheetTabs />
      <StatusBar />
      <Taskbar />
    </div>
  );
}
